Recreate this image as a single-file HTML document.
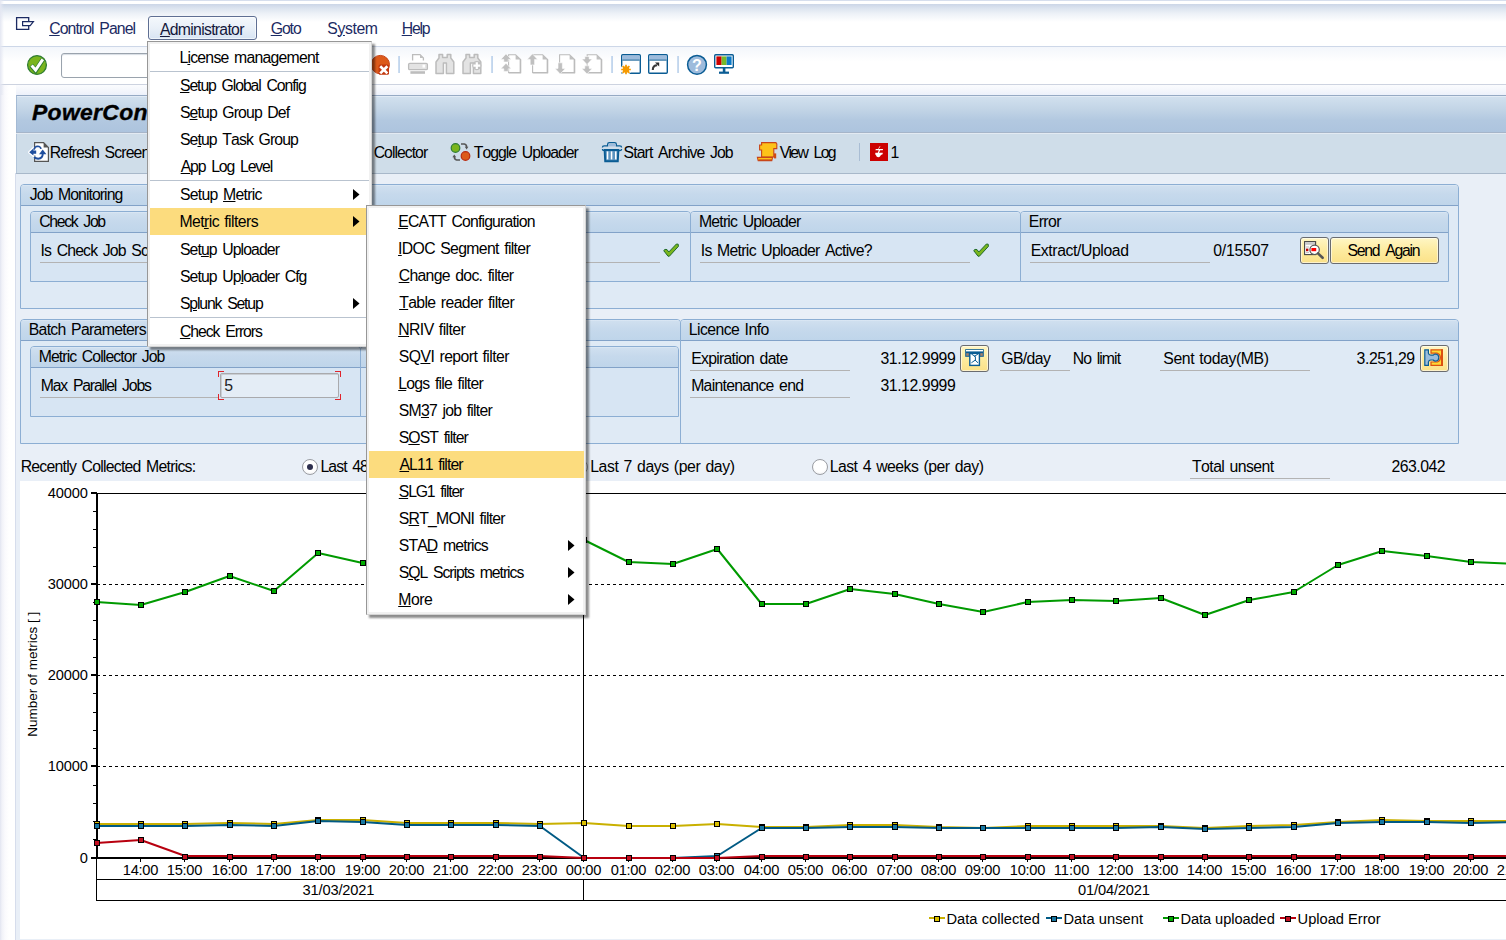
<!DOCTYPE html>
<html><head><meta charset="utf-8"><title>PowerConnect Control Panel</title><style>html,body{margin:0;padding:0}body{width:1506px;height:940px;overflow:hidden;position:relative;font-family:"Liberation Sans",sans-serif;background:#e9eff7}
.t{position:absolute;white-space:pre;line-height:20px;font-kerning:none;font-family:"Liberation Sans",sans-serif}
.t u{text-decoration:underline;text-underline-offset:1px;text-decoration-thickness:1px}
div,svg{position:absolute}</style></head><body>
<div style="position:absolute;left:0px;top:0px;width:1506px;height:940px;background:#e9eff7;"></div>
<div style="position:absolute;left:0px;top:0px;width:1506px;height:47px;background:linear-gradient(#d6deed 0px,#d6deed 1px,#ffffff 1px,#ffffff 4px,#ccd6e7 4.2px,#dbe3ef 8px,#eef2f8 14px,#ffffff 22px,#ffffff 100%);"></div>
<div style="position:absolute;left:0px;top:46px;width:1506px;height:1px;background:#cdd7e8;"></div>
<div style="position:absolute;left:0px;top:47px;width:1506px;height:37px;background:linear-gradient(#f3f6fb,#ffffff 40%,#ffffff);"></div>
<div style="position:absolute;left:0px;top:84px;width:1506px;height:1px;background:#cdd3e0;"></div>
<div style="position:absolute;left:0px;top:85px;width:1506px;height:10px;background:linear-gradient(#fbfcfe,#edf1fa);"></div>
<div style="position:absolute;left:0px;top:85px;width:16px;height:855px;background:linear-gradient(90deg,#e2e5f1 0px,#f1f2f8 2px,#fafafd 5px,#ffffff 9px,#ffffff 16px);"></div>
<div style="position:absolute;left:15px;top:173px;width:1px;height:767px;background:#d6ddec;"></div>
<div style="position:absolute;left:16px;top:174px;width:4px;height:766px;background:#e9eff7;"></div>
<div style="position:absolute;left:0px;top:0px;width:4px;height:95px;background:linear-gradient(90deg,#e4e7f2,rgba(255,255,255,0));"></div>
<div style="position:absolute;left:16px;top:95px;width:1490px;height:37px;background:linear-gradient(#e2ebf5 0px,#e2ebf5 1px,#d1e0ee 1px,#c2d4e6 38%,#b2c8e0 68%,#adc4de 100%);border-top:1px solid #96aac4;border-left:1px solid #a4bad4;box-sizing:border-box;"></div>
<div style="position:absolute;left:16px;top:132px;width:1490px;height:1px;background:#a6b5c9;"></div>
<div style="position:absolute;left:16px;top:133px;width:1490px;height:1px;background:#e3eaf2;"></div>
<div style="position:absolute;left:16px;top:134px;width:1490px;height:39px;background:#cfdde9;border-left:1px solid #b4c6da;box-sizing:border-box;"></div>
<div style="position:absolute;left:16px;top:173px;width:1490px;height:1px;background:#a8b8ca;"></div>
<svg style="position:absolute;left:0px;top:0px" width="40" height="40" viewBox="0 0 40 40"><path d="M28.7 21 V17.6 H16.6 V29.4 H28.7 V26" fill="none" stroke="#1c2b63" stroke-width="1.3"/><path d="M22.6 21.6 H33.4 L30.2 25.6 H22.6 Z" fill="none" stroke="#1c2b63" stroke-width="1.2"/></svg>
<div class="t" style="left:49.20px;top:18.52px;font-size:15.80px;color:#1c2b63;letter-spacing:-0.917px;word-spacing:2.135px;"><u>C</u>ontrol Panel</div>
<div style="position:absolute;left:148px;top:16px;width:109px;height:24px;border:1px solid #5f6f93;border-radius:3px;box-sizing:border-box;background:linear-gradient(#f4f8fc,#e9f0f8 50%,#d7e4f3);box-shadow:inset 0 0 0 1px rgba(255,255,255,.6);"></div>
<div class="t" style="left:159.97px;top:19.52px;font-size:15.80px;color:#14183c;letter-spacing:-0.715px;"><u>A</u>dministrator</div>
<div class="t" style="left:270.71px;top:18.52px;font-size:15.80px;color:#1c2b63;letter-spacing:-1.099px;"><u>G</u>oto</div>
<div class="t" style="left:327.28px;top:18.52px;font-size:15.80px;color:#1c2b63;letter-spacing:-0.384px;">S<u>y</u>stem</div>
<div class="t" style="left:401.70px;top:18.52px;font-size:15.80px;color:#1c2b63;letter-spacing:-1.178px;"><u>H</u>elp</div>
<div style="position:absolute;left:61px;top:53px;width:305px;height:25px;border:1px solid #9aa3ad;border-radius:3px;box-sizing:border-box;background:#fff;box-shadow:inset 0 1px 1px #d8dde4;"></div>
<div class="t" style="left:32.42px;top:103.11px;font-size:21.60px;color:#000;font-weight:bold;font-style:italic;letter-spacing:0.3px;-webkit-text-stroke:0.35px #000;transform-origin:0 50%;transform:scaleX(1.06);">PowerConnect Control Panel</div>
<div class="t" style="left:49.70px;top:142.52px;font-size:15.80px;color:#000;letter-spacing:-0.859px;word-spacing:2.019px;">Refresh Screen</div>
<div class="t" style="left:373.70px;top:142.52px;font-size:15.80px;color:#000;letter-spacing:-0.985px;">Collector</div>
<div class="t" style="left:473.85px;top:142.52px;font-size:15.80px;color:#000;letter-spacing:-1.008px;word-spacing:2.317px;">Toggle Uploader</div>
<div class="t" style="left:623.58px;top:142.52px;font-size:15.80px;color:#000;letter-spacing:-0.902px;word-spacing:2.104px;">Start Archive Job</div>
<div class="t" style="left:779.63px;top:142.52px;font-size:15.80px;color:#000;letter-spacing:-1.662px;word-spacing:3.624px;">View Log</div>
<div style="position:absolute;left:859px;top:143px;width:1px;height:18px;background:#a9bdd4;"></div>
<div class="t" style="left:890.40px;top:142.52px;font-size:15.80px;color:#000;">1</div>
<div style="position:absolute;left:20px;top:184px;width:1439px;height:125px;box-sizing:border-box;border:1px solid #8caed3;border-radius:4px 4px 0 0;background:#dfeaf5;"></div>
<div style="position:absolute;left:21px;top:185px;width:1437px;height:20px;background:linear-gradient(#dde9f5 0px,#cfdfef 1.5px,#c6d9ec 45%,#bfd5ea 100%);border-bottom:1px solid #82a2c8;border-radius:3px 3px 0 0;"></div>
<div class="t" style="left:29.75px;top:184.52px;font-size:15.80px;color:#000;letter-spacing:-0.943px;word-spacing:2.185px;">Job Monitoring</div>
<div style="position:absolute;left:30px;top:211px;width:331px;height:71px;box-sizing:border-box;border:1px solid #8caed3;border-radius:4px 4px 0 0;background:#d7e5f3;"></div>
<div style="position:absolute;left:31px;top:212px;width:329px;height:20px;background:linear-gradient(#dde9f5 0px,#cfdfef 1.5px,#c6d9ec 45%,#bfd5ea 100%);border-bottom:1px solid #82a2c8;border-radius:3px 3px 0 0;"></div>
<div style="position:absolute;left:360px;top:211px;width:331px;height:71px;box-sizing:border-box;border:1px solid #8caed3;border-radius:4px 4px 0 0;background:#d7e5f3;"></div>
<div style="position:absolute;left:361px;top:212px;width:329px;height:20px;background:linear-gradient(#dde9f5 0px,#cfdfef 1.5px,#c6d9ec 45%,#bfd5ea 100%);border-bottom:1px solid #82a2c8;border-radius:3px 3px 0 0;"></div>
<div style="position:absolute;left:690px;top:211px;width:331px;height:71px;box-sizing:border-box;border:1px solid #8caed3;border-radius:4px 4px 0 0;background:#d7e5f3;"></div>
<div style="position:absolute;left:691px;top:212px;width:329px;height:20px;background:linear-gradient(#dde9f5 0px,#cfdfef 1.5px,#c6d9ec 45%,#bfd5ea 100%);border-bottom:1px solid #82a2c8;border-radius:3px 3px 0 0;"></div>
<div style="position:absolute;left:1020px;top:211px;width:429px;height:71px;box-sizing:border-box;border:1px solid #8caed3;border-radius:4px 4px 0 0;background:#d7e5f3;"></div>
<div style="position:absolute;left:1021px;top:212px;width:427px;height:20px;background:linear-gradient(#dde9f5 0px,#cfdfef 1.5px,#c6d9ec 45%,#bfd5ea 100%);border-bottom:1px solid #82a2c8;border-radius:3px 3px 0 0;"></div>
<div class="t" style="left:39.20px;top:211.52px;font-size:15.80px;color:#000;letter-spacing:-1.331px;word-spacing:2.961px;">Check Job</div>
<div class="t" style="left:40.54px;top:240.52px;font-size:15.80px;color:#000;letter-spacing:-0.846px;word-spacing:1.992px;">Is Check Job Scheduled?</div>
<div style="position:absolute;left:40px;top:262px;width:290px;height:1px;background:#b3b3b3;"></div>
<div style="position:absolute;left:370px;top:262px;width:290px;height:1px;background:#b3b3b3;"></div>
<div class="t" style="left:699.00px;top:211.52px;font-size:15.80px;color:#000;letter-spacing:-0.805px;word-spacing:1.910px;">Metric Uploader</div>
<div class="t" style="left:700.84px;top:240.52px;font-size:15.80px;color:#000;letter-spacing:-0.713px;word-spacing:1.727px;">Is Metric Uploader Active?</div>
<div style="position:absolute;left:700px;top:262px;width:270px;height:1px;background:#b3b3b3;"></div>
<div class="t" style="left:1028.70px;top:211.52px;font-size:15.80px;color:#000;letter-spacing:-0.563px;">Error</div>
<div class="t" style="left:1030.70px;top:240.52px;font-size:15.80px;color:#000;letter-spacing:-0.409px;">Extract/Upload</div>
<div style="position:absolute;left:1030px;top:262px;width:179.5px;height:1px;background:#b3b3b3;"></div>
<div class="t" style="left:1213.18px;top:240.52px;font-size:15.80px;color:#000;letter-spacing:-0.200px;">0/15507</div>
<div style="position:absolute;left:1300px;top:237px;width:29px;height:27px;box-sizing:border-box;border:1px solid #6a6c70;border-radius:3px;background:linear-gradient(#fff6c4,#fdeb9f 50%,#fbe188);box-shadow:inset 0 0 0 1px rgba(255,255,255,.55);"></div>
<div style="position:absolute;left:1330px;top:237px;width:109px;height:27px;box-sizing:border-box;border:1px solid #6a6c70;border-radius:3px;background:linear-gradient(#fff6c4,#fdeb9f 50%,#fbe188);box-shadow:inset 0 0 0 1px rgba(255,255,255,.55);"></div>
<div class="t" style="left:1347.58px;top:240.52px;font-size:15.80px;color:#000;letter-spacing:-1.280px;word-spacing:2.859px;">Send Again</div>
<div style="position:absolute;left:20px;top:319px;width:661px;height:125px;box-sizing:border-box;border:1px solid #8caed3;border-radius:4px 4px 0 0;background:#dfeaf5;"></div>
<div style="position:absolute;left:21px;top:320px;width:659px;height:20px;background:linear-gradient(#dde9f5 0px,#cfdfef 1.5px,#c6d9ec 45%,#bfd5ea 100%);border-bottom:1px solid #82a2c8;border-radius:3px 3px 0 0;"></div>
<div class="t" style="left:28.70px;top:319.52px;font-size:15.80px;color:#000;letter-spacing:-0.684px;word-spacing:1.667px;">Batch Parameters</div>
<div style="position:absolute;left:30px;top:346px;width:331px;height:71px;box-sizing:border-box;border:1px solid #8caed3;border-radius:4px 4px 0 0;background:#d7e5f3;"></div>
<div style="position:absolute;left:31px;top:347px;width:329px;height:20px;background:linear-gradient(#dde9f5 0px,#cfdfef 1.5px,#c6d9ec 45%,#bfd5ea 100%);border-bottom:1px solid #82a2c8;border-radius:3px 3px 0 0;"></div>
<div style="position:absolute;left:360px;top:346px;width:319px;height:71px;box-sizing:border-box;border:1px solid #8caed3;border-radius:4px 4px 0 0;background:#d7e5f3;"></div>
<div style="position:absolute;left:361px;top:347px;width:317px;height:20px;background:linear-gradient(#dde9f5 0px,#cfdfef 1.5px,#c6d9ec 45%,#bfd5ea 100%);border-bottom:1px solid #82a2c8;border-radius:3px 3px 0 0;"></div>
<div class="t" style="left:38.70px;top:346.52px;font-size:15.80px;color:#000;letter-spacing:-0.903px;word-spacing:2.106px;">Metric Collector Job</div>
<div class="t" style="left:40.70px;top:375.52px;font-size:15.80px;color:#000;letter-spacing:-1.169px;word-spacing:2.638px;">Max Parallel Jobs</div>
<div style="position:absolute;left:40px;top:397px;width:179px;height:1px;background:#b3b3b3;"></div>
<div style="position:absolute;left:220px;top:373px;width:119px;height:25px;box-sizing:border-box;border:1px solid #a9aaad;border-radius:2px;background:#e4edf6;box-shadow:inset 1px 1px 0 #c9ced4;"></div>
<div style="position:absolute;left:218px;top:371px;width:6px;height:1px;background:#e0242b;"></div>
<div style="position:absolute;left:218px;top:371px;width:1px;height:6px;background:#e0242b;"></div>
<div style="position:absolute;left:335px;top:371px;width:6px;height:1px;background:#e0242b;"></div>
<div style="position:absolute;left:340px;top:371px;width:1px;height:6px;background:#e0242b;"></div>
<div style="position:absolute;left:218px;top:399px;width:6px;height:1px;background:#e0242b;"></div>
<div style="position:absolute;left:218px;top:394px;width:1px;height:6px;background:#e0242b;"></div>
<div style="position:absolute;left:335px;top:399px;width:6px;height:1px;background:#e0242b;"></div>
<div style="position:absolute;left:340px;top:394px;width:1px;height:6px;background:#e0242b;"></div>
<div class="t" style="left:224.37px;top:375.52px;font-size:15.80px;color:#222;">5</div>
<div style="position:absolute;left:680px;top:319px;width:779px;height:125px;box-sizing:border-box;border:1px solid #8caed3;border-radius:4px 4px 0 0;background:#dfeaf5;"></div>
<div style="position:absolute;left:681px;top:320px;width:777px;height:20px;background:linear-gradient(#dde9f5 0px,#cfdfef 1.5px,#c6d9ec 45%,#bfd5ea 100%);border-bottom:1px solid #82a2c8;border-radius:3px 3px 0 0;"></div>
<div class="t" style="left:688.70px;top:319.52px;font-size:15.80px;color:#000;letter-spacing:-0.538px;word-spacing:1.376px;">Licence Info</div>
<div class="t" style="left:691.20px;top:348.52px;font-size:15.80px;color:#000;letter-spacing:-0.725px;word-spacing:1.750px;">Expiration date</div>
<div style="position:absolute;left:690px;top:370px;width:160px;height:1px;background:#b3b3b3;"></div>
<div class="t" style="left:880.40px;top:348.52px;font-size:15.80px;color:#000;letter-spacing:-0.414px;">31.12.9999</div>
<div style="position:absolute;left:960px;top:345px;width:29px;height:27px;box-sizing:border-box;border:1px solid #6a6c70;border-radius:3px;background:linear-gradient(#fff6c4,#fdeb9f 50%,#fbe188);box-shadow:inset 0 0 0 1px rgba(255,255,255,.55);"></div>
<div class="t" style="left:1001.21px;top:348.52px;font-size:15.80px;color:#000;letter-spacing:-0.613px;">GB/day</div>
<div style="position:absolute;left:1000px;top:370px;width:70px;height:1px;background:#b3b3b3;"></div>
<div class="t" style="left:1072.70px;top:348.52px;font-size:15.80px;color:#000;letter-spacing:-0.911px;word-spacing:2.123px;">No limit</div>
<div class="t" style="left:1163.28px;top:348.52px;font-size:15.80px;color:#000;letter-spacing:-0.397px;word-spacing:1.094px;">Sent today(MB)</div>
<div style="position:absolute;left:1160px;top:370px;width:150px;height:1px;background:#b3b3b3;"></div>
<div class="t" style="left:1356.60px;top:348.52px;font-size:15.80px;color:#000;letter-spacing:-0.422px;">3.251,29</div>
<div style="position:absolute;left:1420px;top:345px;width:29px;height:27px;box-sizing:border-box;border:1px solid #6a6c70;border-radius:3px;background:linear-gradient(#fff6c4,#fdeb9f 50%,#fbe188);box-shadow:inset 0 0 0 1px rgba(255,255,255,.55);"></div>
<div class="t" style="left:691.20px;top:375.52px;font-size:15.80px;color:#000;letter-spacing:-0.726px;word-spacing:1.751px;">Maintenance end</div>
<div style="position:absolute;left:690px;top:397px;width:160px;height:1px;background:#b3b3b3;"></div>
<div class="t" style="left:880.40px;top:375.52px;font-size:15.80px;color:#000;letter-spacing:-0.414px;">31.12.9999</div>
<div class="t" style="left:20.70px;top:456.52px;font-size:15.80px;color:#000;letter-spacing:-0.754px;word-spacing:1.807px;">Recently Collected Metrics:</div>
<div style="position:absolute;left:302px;top:459px;width:16px;height:16px;box-sizing:border-box;border:1.5px solid #9b9da3;border-radius:50%;background:radial-gradient(circle at 50% 40%,#ffffff 55%,#e6e8ec);"></div><div style="position:absolute;left:307px;top:464px;width:6px;height:6px;border-radius:50%;background:#2d2f4e;"></div>
<div class="t" style="left:320.50px;top:456.52px;font-size:15.80px;color:#000;letter-spacing:-0.934px;word-spacing:2.169px;">Last 48 hours</div>
<div style="position:absolute;left:572px;top:459px;width:16px;height:16px;box-sizing:border-box;border:1.5px solid #9b9da3;border-radius:50%;background:radial-gradient(circle at 50% 40%,#ffffff 55%,#e6e8ec);"></div>
<div class="t" style="left:590.20px;top:456.52px;font-size:15.80px;color:#000;letter-spacing:-0.404px;word-spacing:1.107px;">Last 7 days (per day)</div>
<div style="position:absolute;left:812px;top:459px;width:16px;height:16px;box-sizing:border-box;border:1.5px solid #9b9da3;border-radius:50%;background:radial-gradient(circle at 50% 40%,#ffffff 55%,#e6e8ec);"></div>
<div class="t" style="left:829.70px;top:456.52px;font-size:15.80px;color:#000;letter-spacing:-0.519px;word-spacing:1.339px;">Last 4 weeks (per day)</div>
<div class="t" style="left:1192.05px;top:456.52px;font-size:15.80px;color:#000;letter-spacing:-0.576px;word-spacing:1.452px;">Total unsent</div>
<div style="position:absolute;left:1190px;top:478px;width:140px;height:1px;background:#b3b3b3;"></div>
<div class="t" style="left:1391.61px;top:456.52px;font-size:15.80px;color:#000;letter-spacing:-0.537px;">263.042</div>
<svg style="position:absolute;left:0;top:0" width="1506" height="940" viewBox="0 0 1506 940"><circle cx="37" cy="65" r="9.4" fill="#7ab51d" stroke="#2f7d32" stroke-width="1.3"/><path d="M31.2 65.2 L35.6 70.6 L43 59.2" fill="none" stroke="#2f7d32" stroke-width="4.6" stroke-linejoin="miter"/><path d="M31.6 65.4 L35.6 70 L42.8 59.4" fill="none" stroke="#fff" stroke-width="3"/><circle cx="380.3" cy="64.6" r="9.2" fill="#dc5a1a" stroke="#c8461a" stroke-width="1"/><rect x="378.6" y="64.6" width="10.4" height="10.2" rx="1.6" fill="#c2380e"/><path d="M381.2 67.2 L386.4 72.4 M386.4 67.2 L381.2 72.4" stroke="#fff" stroke-width="2.7" stroke-linecap="square"/><rect x="398.4" y="56" width="1.3" height="17" fill="#a9c5e6"/><rect x="491.4" y="56" width="1.3" height="17" fill="#a9c5e6"/><rect x="611.4" y="56" width="1.3" height="17" fill="#a9c5e6"/><rect x="677.4" y="56" width="1.3" height="17" fill="#a9c5e6"/><path d="M412.6 60.5 V54.6 H420 L423.4 58 V60.5" fill="#fff" stroke="#bcbcbc" stroke-width="1.3"/><path d="M420 54.6 V58 H423.4 Z" fill="#c0c0c0"/><rect x="408.6" y="63.4" width="18.8" height="6.2" rx="1.2" fill="#e3e3e3" stroke="#bcbcbc" stroke-width="1.3"/><rect x="422.5" y="64.6" width="2.6" height="3" fill="#fff"/><rect x="410.4" y="71.2" width="14.6" height="2.6" fill="#bdbdbd"/><path d="M439 54.6 h3.6 v3 h4.6 v-3 h3.6 v3.4 l3 4 v11.6 h-7.4 v-10.6 h-3 v10.6 h-7.4 v-11.6 l3 -4 z" fill="#e3e3e3" stroke="#bcbcbc" stroke-width="1.5" stroke-linejoin="round"/><path d="M466 54.6 h3.6 v3 h4.6 v-3 h3.6 v3.4 l3 4 v11.6 h-7.4 v-10.6 h-3 v10.6 h-7.4 v-11.6 l3 -4 z" fill="#e3e3e3" stroke="#bcbcbc" stroke-width="1.5" stroke-linejoin="round"/><circle cx="476.8" cy="65.6" r="4.6" fill="#c0c0c0"/><path d="M473.4 65.6 h6.8 M476.8 62.2 v6.8" stroke="#fff" stroke-width="2.2"/><path d="M508.6 54.7 H515.6 L520.6 59.6 V72.5 H508.6 Z" fill="#fff" stroke="#bcbcbc" stroke-width="1.1"/><path d="M515.6 54.7 V59.6 H520.6 Z" fill="#c0c0c0"/><path d="M508.6 72.7 H520.4 V59.6" fill="none" stroke="#bcbcbc" stroke-width="1.5"/><path d="M506 53.8 l5.2 5.6 h-3 v2.6 h-4.4 v-2.6 h-3 z" fill="#c0c0c0" stroke="#fff" stroke-width="0.6"/><path d="M506 63.2 l5.2 5.6 h-3 v2.6 h-4.4 v-2.6 h-3 z" fill="#c0c0c0" stroke="#fff" stroke-width="0.6"/><path d="M532.6 54.7 H542.6 L547.6 59.6 V72.5 H532.6 Z" fill="#fff" stroke="#bcbcbc" stroke-width="1.1"/><path d="M542.6 54.7 V59.6 H547.6 Z" fill="#c0c0c0"/><path d="M532.6 72.7 H547.4 V59.6" fill="none" stroke="#bcbcbc" stroke-width="1.5"/><path d="M532.4 53.8 l5.2 5.6 h-3 v5.6 h-4.4 v-5.6 h-3 z" fill="#c0c0c0" stroke="#fff" stroke-width="0.6"/><path d="M559.6 54.7 H569.6 L574.6 59.6 V72.5 H559.6 Z" fill="#fff" stroke="#bcbcbc" stroke-width="1.1"/><path d="M569.6 54.7 V59.6 H574.6 Z" fill="#c0c0c0"/><path d="M559.6 72.7 H574.4 V59.6" fill="none" stroke="#bcbcbc" stroke-width="1.5"/><path d="M560.2 74 l5.2 -5.6 h-3 v-5.6 h-4.4 v5.6 h-3 z" fill="#c0c0c0" stroke="#fff" stroke-width="0.6"/><path d="M587.2 54.7 H596.6 L601.6 59.6 V72.5 H587.2 Z" fill="#fff" stroke="#bcbcbc" stroke-width="1.1"/><path d="M596.6 54.7 V59.6 H601.6 Z" fill="#c0c0c0"/><path d="M587.2 72.7 H601.4 V59.6" fill="none" stroke="#bcbcbc" stroke-width="1.5"/><path d="M587 64.6 l5.2 -5.6 h-3 v-2.6 h-4.4 v2.6 h-3 z" fill="#c0c0c0" stroke="#fff" stroke-width="0.6"/><path d="M587 74 l5.2 -5.6 h-3 v-2.6 h-4.4 v2.6 h-3 z" fill="#c0c0c0" stroke="#fff" stroke-width="0.6"/><rect x="621.7" y="54.7" width="18.6" height="18.6" rx="1" fill="#fff" stroke="#0a5c94" stroke-width="1.4"/><rect x="622.4" y="55.4" width="17.2" height="4.4" fill="#9dbbdc"/><rect x="622.4" y="59.6" width="17.2" height="1" fill="#0a5c94"/><circle cx="626" cy="69.5" r="5.4" fill="#fff"/><circle cx="626" cy="69.5" r="3.2" fill="#f59a00"/><path d="M626 64.7 v9.6 M621.2 69.5 h9.6 M622.6 66.1 l6.8 6.8 M629.4 66.1 l-6.8 6.8" stroke="#f59a00" stroke-width="1.7"/><rect x="648.7" y="54.7" width="18.6" height="18.6" rx="1" fill="#fff" stroke="#0a5c94" stroke-width="1.4"/><rect x="649.4" y="55.4" width="17.2" height="4.4" fill="#9dbbdc"/><rect x="649.4" y="59.6" width="17.2" height="1" fill="#0a5c94"/><path d="M652.8 70 q0 -4.8 4.4 -4.8" fill="none" stroke="#3a3a3a" stroke-width="2.1"/><path d="M655 62.4 h4.2 v4.2 z" fill="#2a2a2a"/><circle cx="697" cy="64.8" r="9.4" fill="#9dbbdc" stroke="#0a5c94" stroke-width="1.5"/><text x="697" y="70.6" font-family="Liberation Sans, sans-serif" font-weight="bold" font-size="16" text-anchor="middle" fill="#fff">?</text><rect x="714.7" y="54.7" width="18.6" height="13" rx="1" fill="#fff" stroke="#0a5c94" stroke-width="1.4"/><rect x="716.4" y="56.4" width="5.2" height="8.6" fill="#cc0000"/><rect x="721.6" y="56.4" width="5" height="8.6" fill="#76b82a"/><rect x="726.6" y="56.4" width="5" height="8.6" fill="#0a7ac8"/><rect x="722.8" y="68" width="2.6" height="4" fill="#0a5c94"/><rect x="719" y="71.6" width="10" height="2.2" fill="#0a5c94"/><path d="M34.6 142.6 H43.6 L48.4 147.4 V161.4 H34.6 Z" fill="#fff" stroke="#555" stroke-width="1.2"/><path d="M43.6 142.6 V147.4 H48.4 Z" fill="#555"/><path d="M29 152.2 L33.6 147.8 V150.2 H36.6 V154 H33.6 V156.2 Z" fill="#fff" stroke="#fff" stroke-width="2" stroke-linejoin="round"/><path d="M41 148.8 Q40.6 146.3 37.6 146.2 Q34.6 146.4 34 149.6" fill="none" stroke="#1f4e9e" stroke-width="1.6"/><path d="M29.2 152.2 L33.4 148.6 V150.6 H36.2 V153.8 H33.4 V155.6 Z" fill="#1f4e9e"/><path d="M42.7 149.4 L46.4 154.2 H39 Z" fill="#1f4e9e"/><path d="M42.8 153.6 Q42.8 158.6 38.2 158.7 Q35.6 158.5 34.2 157" fill="none" stroke="#1f4e9e" stroke-width="1.9"/><circle cx="455.5" cy="148" r="4.3" fill="#7ab51d" stroke="#2f7d32" stroke-width="1.2"/><circle cx="465.5" cy="156" r="4.3" fill="#dc5a1a" stroke="#b82a10" stroke-width="1.2"/><path d="M461 144 h3.4 q2.2 0.4 2.2 3" fill="none" stroke="#555" stroke-width="1.6"/><path d="M464.8 146.8 h3.6 l-1.8 2.8 z" fill="#555"/><path d="M460 160 h-3.4 q-2.2 -0.4 -2.2 -3" fill="none" stroke="#555" stroke-width="1.6"/><path d="M452.4 157.2 h3.8 l-1.9 -2.8 z" fill="#555"/><path d="M602.4 147.4 q0 -1.6 1.8 -1.6 h3.4 v-1.4 q0 -1.8 1.8 -1.8 h5.2 q1.8 0 1.8 1.8 v1.4 h3.4 q1.8 0 1.8 1.6" fill="none" stroke="#0a5c94" stroke-width="1.3"/><rect x="608.6" y="144" width="6.8" height="2.4" fill="#9dbbdc"/><path d="M602.4 149 q0 1.6 1.8 1.6 h15.6 q1.8 0 1.8 -1.6" fill="none" stroke="#0a5c94" stroke-width="1.3"/><path d="M604.6 150 h13.8 l-0.6 11.2 h-12.6 z" fill="#5d94c0" stroke="#0a5c94" stroke-width="1.9"/><rect x="606.8" y="151.4" width="1.5" height="8" fill="#fff"/><rect x="610.8" y="151.4" width="1.5" height="8" fill="#fff"/><rect x="615" y="151.4" width="1.5" height="8" fill="#fff"/><path d="M761.6 142.6 H775.6 q1.6 0.4 1.2 3 v3 h-3 V157 H761.6 V150 h-2 v-5 h2 Z" fill="#fdc21a" stroke="#c8461a" stroke-width="1.1"/><rect x="774" y="153.4" width="2.2" height="5" fill="#d04a14"/><path d="M757.4 157.4 h15.2 l-0.8 3.4 h-13.6 z" fill="#fdc21a" stroke="#c8461a" stroke-width="1.1"/><rect x="758.6" y="159.4" width="13.4" height="1.6" fill="#c8461a"/><rect x="870" y="143" width="18" height="18" fill="#cc0000"/><path d="M880.6 146 l-2 3 h4.4 l-0.2 1.2 h-2.6 l-1.2 2.6 h3.8 l-0.2 1.4 q-2 0.6 -2.6 2.2 q-1.2 1.4 -3.2 0.4 l-0.8 -1.6 l-0.8 -1 l0.2 -1.4 h2.4 l1 -2.6 h-3.4 l0.4 -1.2 h2.4 l1 -2.2 z" fill="#fff"/><path transform="translate(663,243)" d="M0.7 7.6 L2 6.4 L4 6.6 L5.8 9 L13.4 1 L15.2 1.2 L15.4 3.4 L6.4 13.2 L5 13.2 Z" fill="#7ab51d" stroke="#1f6b2a" stroke-width="1" stroke-linejoin="round"/><path transform="translate(973,243)" d="M0.7 7.6 L2 6.4 L4 6.6 L5.8 9 L13.4 1 L15.2 1.2 L15.4 3.4 L6.4 13.2 L5 13.2 Z" fill="#7ab51d" stroke="#1f6b2a" stroke-width="1" stroke-linejoin="round"/><rect x="1304.6" y="241.6" width="11" height="13" fill="#fff" stroke="#444" stroke-width="1.1"/><rect x="1305.2" y="242.2" width="9.8" height="2.6" fill="#c8c8c8"/><rect x="1306" y="248.6" width="2.4" height="2.6" fill="#c00000"/><path d="M1306 247 h3 M1306 252.6 h3" stroke="#aaa" stroke-width=".8"/><circle cx="1314.6" cy="249.8" r="4.7" fill="#fff" stroke="#555" stroke-width="1.2"/><rect x="1311.4" y="248" width="4.8" height="3.2" fill="#ff0000"/><path d="M1318 253.4 L1322.6 257.8" stroke="#555" stroke-width="2.6" stroke-linecap="round"/><rect x="965.2" y="349.2" width="18.6" height="7.6" fill="#0a5c94"/><rect x="966" y="350" width="17" height="1.4" fill="#fff"/><rect x="966.2" y="353.2" width="2.6" height="2.6" fill="#a8826a"/><rect x="980.2" y="353.2" width="2.6" height="2.6" fill="#a8826a"/><rect x="969.8" y="353.4" width="9.6" height="12" fill="#fff" stroke="#0a5c94" stroke-width="1.4"/><path d="M971.4 354 L975.4 356.6 V360 L971.4 362.8 M978 354 L974 356.6 M975 360 L978 362.8" fill="none" stroke="#0a5c94" stroke-width="1"/><path d="M1431 349.8 H1442.4 V365.4 H1431 V362 h6.4 q3 -1 3 -4.4 q0 -3.4 -3 -4.4 H1431 Z" fill="#fdd835" stroke="#dc5010" stroke-width="1.2"/><rect x="1441" y="349.4" width="1.9" height="16.4" fill="#dc5010"/><path d="M1424.8 349.8 h3.6 v3.4 q0.4 2 2.4 2 h2.4 q1 -1.2 2.6 -1.2 q3 0.4 3 3.6 q0 3.2 -3 3.6 q-1.6 0 -2.6 -1.2 h-2.4 q-2 0 -2.4 2 v3.4 h-3.6 z" fill="#9abcdc" stroke="#0a5c94" stroke-width="1.2"/></svg>
<div style="position:absolute;left:20px;top:481px;width:1486px;height:458px;background:#fff;"></div>
<svg style="position:absolute;left:0;top:0" width="1506" height="940" viewBox="0 0 1506 940" font-family="Liberation Sans, sans-serif"><line x1="97" y1="584.5" x2="1506" y2="584.5" stroke="#000" stroke-width="1" stroke-dasharray="3 3" shape-rendering="crispEdges"/><line x1="97" y1="675.5" x2="1506" y2="675.5" stroke="#000" stroke-width="1" stroke-dasharray="3 3" shape-rendering="crispEdges"/><line x1="97" y1="766.5" x2="1506" y2="766.5" stroke="#000" stroke-width="1" stroke-dasharray="3 3" shape-rendering="crispEdges"/><line x1="96" y1="493.5" x2="1506" y2="493.5" stroke="#000" stroke-width="1" shape-rendering="crispEdges"/><rect x="96" y="493" width="2" height="366" fill="#000"/><rect x="91" y="857" width="1415" height="2" fill="#000"/><rect x="93" y="839" width="4" height="1" fill="#000" shape-rendering="crispEdges"/><rect x="93" y="821" width="4" height="1" fill="#000" shape-rendering="crispEdges"/><rect x="93" y="803" width="4" height="1" fill="#000" shape-rendering="crispEdges"/><rect x="93" y="785" width="4" height="1" fill="#000" shape-rendering="crispEdges"/><rect x="91" y="765" width="6" height="2" fill="#000" shape-rendering="crispEdges"/><rect x="93" y="748" width="4" height="1" fill="#000" shape-rendering="crispEdges"/><rect x="93" y="730" width="4" height="1" fill="#000" shape-rendering="crispEdges"/><rect x="93" y="712" width="4" height="1" fill="#000" shape-rendering="crispEdges"/><rect x="93" y="693" width="4" height="1" fill="#000" shape-rendering="crispEdges"/><rect x="91" y="674" width="6" height="2" fill="#000" shape-rendering="crispEdges"/><rect x="93" y="657" width="4" height="1" fill="#000" shape-rendering="crispEdges"/><rect x="93" y="639" width="4" height="1" fill="#000" shape-rendering="crispEdges"/><rect x="93" y="620" width="4" height="1" fill="#000" shape-rendering="crispEdges"/><rect x="93" y="602" width="4" height="1" fill="#000" shape-rendering="crispEdges"/><rect x="91" y="583" width="6" height="2" fill="#000" shape-rendering="crispEdges"/><rect x="93" y="566" width="4" height="1" fill="#000" shape-rendering="crispEdges"/><rect x="93" y="547" width="4" height="1" fill="#000" shape-rendering="crispEdges"/><rect x="93" y="529" width="4" height="1" fill="#000" shape-rendering="crispEdges"/><rect x="93" y="511" width="4" height="1" fill="#000" shape-rendering="crispEdges"/><rect x="91" y="492" width="6" height="2" fill="#000" shape-rendering="crispEdges"/><text x="87.8" y="863" font-size="14.67" text-anchor="end" textLength="8" lengthAdjust="spacing">0</text><text x="87.8" y="771" font-size="14.67" text-anchor="end" textLength="40" lengthAdjust="spacing">10000</text><text x="87.8" y="680" font-size="14.67" text-anchor="end" textLength="40" lengthAdjust="spacing">20000</text><text x="87.8" y="589" font-size="14.67" text-anchor="end" textLength="40" lengthAdjust="spacing">30000</text><text x="87.8" y="498" font-size="14.67" text-anchor="end" textLength="40" lengthAdjust="spacing">40000</text><text transform="translate(37,674.3) rotate(-90)" font-size="13.5" text-anchor="middle" textLength="125" lengthAdjust="spacing">Number of metrics [ ]</text><g shape-rendering="crispEdges" stroke="#000" stroke-width="1" fill="none"><line x1="96.5" y1="859" x2="96.5" y2="900.5"/><line x1="96" y1="879.5" x2="1506" y2="879.5"/><line x1="96" y1="900.5" x2="1506" y2="900.5"/><line x1="583.5" y1="494" x2="583.5" y2="857"/><line x1="583.5" y1="879.5" x2="583.5" y2="900.5"/></g><rect x="140" y="859" width="1" height="3" fill="#000" shape-rendering="crispEdges"/><text x="140.6" y="875" font-size="14.67" text-anchor="middle" textLength="35.6" lengthAdjust="spacing">14:00</text><rect x="184" y="859" width="1" height="3" fill="#000" shape-rendering="crispEdges"/><text x="184.6" y="875" font-size="14.67" text-anchor="middle" textLength="35.6" lengthAdjust="spacing">15:00</text><rect x="229" y="859" width="1" height="3" fill="#000" shape-rendering="crispEdges"/><text x="229.6" y="875" font-size="14.67" text-anchor="middle" textLength="35.6" lengthAdjust="spacing">16:00</text><rect x="273" y="859" width="1" height="3" fill="#000" shape-rendering="crispEdges"/><text x="273.6" y="875" font-size="14.67" text-anchor="middle" textLength="35.6" lengthAdjust="spacing">17:00</text><rect x="317" y="859" width="1" height="3" fill="#000" shape-rendering="crispEdges"/><text x="317.6" y="875" font-size="14.67" text-anchor="middle" textLength="35.6" lengthAdjust="spacing">18:00</text><rect x="362" y="859" width="1" height="3" fill="#000" shape-rendering="crispEdges"/><text x="362.6" y="875" font-size="14.67" text-anchor="middle" textLength="35.6" lengthAdjust="spacing">19:00</text><rect x="406" y="859" width="1" height="3" fill="#000" shape-rendering="crispEdges"/><text x="406.6" y="875" font-size="14.67" text-anchor="middle" textLength="35.6" lengthAdjust="spacing">20:00</text><rect x="450" y="859" width="1" height="3" fill="#000" shape-rendering="crispEdges"/><text x="450.6" y="875" font-size="14.67" text-anchor="middle" textLength="35.6" lengthAdjust="spacing">21:00</text><rect x="495" y="859" width="1" height="3" fill="#000" shape-rendering="crispEdges"/><text x="495.6" y="875" font-size="14.67" text-anchor="middle" textLength="35.6" lengthAdjust="spacing">22:00</text><rect x="539" y="859" width="1" height="3" fill="#000" shape-rendering="crispEdges"/><text x="539.6" y="875" font-size="14.67" text-anchor="middle" textLength="35.6" lengthAdjust="spacing">23:00</text><rect x="583" y="859" width="1" height="3" fill="#000" shape-rendering="crispEdges"/><text x="583.6" y="875" font-size="14.67" text-anchor="middle" textLength="35.6" lengthAdjust="spacing">00:00</text><rect x="628" y="859" width="1" height="3" fill="#000" shape-rendering="crispEdges"/><text x="628.6" y="875" font-size="14.67" text-anchor="middle" textLength="35.6" lengthAdjust="spacing">01:00</text><rect x="672" y="859" width="1" height="3" fill="#000" shape-rendering="crispEdges"/><text x="672.6" y="875" font-size="14.67" text-anchor="middle" textLength="35.6" lengthAdjust="spacing">02:00</text><rect x="716" y="859" width="1" height="3" fill="#000" shape-rendering="crispEdges"/><text x="716.6" y="875" font-size="14.67" text-anchor="middle" textLength="35.6" lengthAdjust="spacing">03:00</text><rect x="761" y="859" width="1" height="3" fill="#000" shape-rendering="crispEdges"/><text x="761.6" y="875" font-size="14.67" text-anchor="middle" textLength="35.6" lengthAdjust="spacing">04:00</text><rect x="805" y="859" width="1" height="3" fill="#000" shape-rendering="crispEdges"/><text x="805.6" y="875" font-size="14.67" text-anchor="middle" textLength="35.6" lengthAdjust="spacing">05:00</text><rect x="849" y="859" width="1" height="3" fill="#000" shape-rendering="crispEdges"/><text x="849.6" y="875" font-size="14.67" text-anchor="middle" textLength="35.6" lengthAdjust="spacing">06:00</text><rect x="894" y="859" width="1" height="3" fill="#000" shape-rendering="crispEdges"/><text x="894.6" y="875" font-size="14.67" text-anchor="middle" textLength="35.6" lengthAdjust="spacing">07:00</text><rect x="938" y="859" width="1" height="3" fill="#000" shape-rendering="crispEdges"/><text x="938.6" y="875" font-size="14.67" text-anchor="middle" textLength="35.6" lengthAdjust="spacing">08:00</text><rect x="982" y="859" width="1" height="3" fill="#000" shape-rendering="crispEdges"/><text x="982.6" y="875" font-size="14.67" text-anchor="middle" textLength="35.6" lengthAdjust="spacing">09:00</text><rect x="1027" y="859" width="1" height="3" fill="#000" shape-rendering="crispEdges"/><text x="1027.6" y="875" font-size="14.67" text-anchor="middle" textLength="35.6" lengthAdjust="spacing">10:00</text><rect x="1071" y="859" width="1" height="3" fill="#000" shape-rendering="crispEdges"/><text x="1071.6" y="875" font-size="14.67" text-anchor="middle" textLength="35.6" lengthAdjust="spacing">11:00</text><rect x="1115" y="859" width="1" height="3" fill="#000" shape-rendering="crispEdges"/><text x="1115.6" y="875" font-size="14.67" text-anchor="middle" textLength="35.6" lengthAdjust="spacing">12:00</text><rect x="1160" y="859" width="1" height="3" fill="#000" shape-rendering="crispEdges"/><text x="1160.6" y="875" font-size="14.67" text-anchor="middle" textLength="35.6" lengthAdjust="spacing">13:00</text><rect x="1204" y="859" width="1" height="3" fill="#000" shape-rendering="crispEdges"/><text x="1204.6" y="875" font-size="14.67" text-anchor="middle" textLength="35.6" lengthAdjust="spacing">14:00</text><rect x="1248" y="859" width="1" height="3" fill="#000" shape-rendering="crispEdges"/><text x="1248.6" y="875" font-size="14.67" text-anchor="middle" textLength="35.6" lengthAdjust="spacing">15:00</text><rect x="1293" y="859" width="1" height="3" fill="#000" shape-rendering="crispEdges"/><text x="1293.6" y="875" font-size="14.67" text-anchor="middle" textLength="35.6" lengthAdjust="spacing">16:00</text><rect x="1337" y="859" width="1" height="3" fill="#000" shape-rendering="crispEdges"/><text x="1337.6" y="875" font-size="14.67" text-anchor="middle" textLength="35.6" lengthAdjust="spacing">17:00</text><rect x="1381" y="859" width="1" height="3" fill="#000" shape-rendering="crispEdges"/><text x="1381.6" y="875" font-size="14.67" text-anchor="middle" textLength="35.6" lengthAdjust="spacing">18:00</text><rect x="1426" y="859" width="1" height="3" fill="#000" shape-rendering="crispEdges"/><text x="1426.6" y="875" font-size="14.67" text-anchor="middle" textLength="35.6" lengthAdjust="spacing">19:00</text><rect x="1470" y="859" width="1" height="3" fill="#000" shape-rendering="crispEdges"/><text x="1470.6" y="875" font-size="14.67" text-anchor="middle" textLength="35.6" lengthAdjust="spacing">20:00</text><rect x="1514" y="859" width="1" height="3" fill="#000" shape-rendering="crispEdges"/><text x="1514.6" y="875" font-size="14.67" text-anchor="middle" textLength="35.6" lengthAdjust="spacing">21:00</text><text x="338.5" y="895" font-size="14.67" text-anchor="middle" textLength="72" lengthAdjust="spacing">31/03/2021</text><text x="1114" y="895" font-size="14.67" text-anchor="middle" textLength="72" lengthAdjust="spacing">01/04/2021</text><polyline points="96.5,602 140.8,605 185.2,592 229.5,576 273.9,591 318.2,553 362.5,563 406.9,566 451.2,570 495.6,560 539.9,566 584.2,540 628.6,562 672.9,564 717.3,549 761.6,604 805.9,604 850.3,589 894.6,594 939.0,604 983.3,612 1027.6,602 1072.0,600 1116.3,601 1160.7,598 1205.0,615 1249.3,600 1293.7,592 1338.0,565 1382.4,551 1426.7,556 1471.0,562 1515.4,564" fill="none" stroke="#009a00" stroke-width="2" stroke-linejoin="round"/><rect x="94.5" y="599.5" width="5" height="5" fill="#00ab00" stroke="#000" stroke-width="1"/><rect x="138.5" y="602.5" width="5" height="5" fill="#00ab00" stroke="#000" stroke-width="1"/><rect x="182.5" y="589.5" width="5" height="5" fill="#00ab00" stroke="#000" stroke-width="1"/><rect x="227.5" y="573.5" width="5" height="5" fill="#00ab00" stroke="#000" stroke-width="1"/><rect x="271.5" y="588.5" width="5" height="5" fill="#00ab00" stroke="#000" stroke-width="1"/><rect x="315.5" y="550.5" width="5" height="5" fill="#00ab00" stroke="#000" stroke-width="1"/><rect x="360.5" y="560.5" width="5" height="5" fill="#00ab00" stroke="#000" stroke-width="1"/><rect x="404.5" y="563.5" width="5" height="5" fill="#00ab00" stroke="#000" stroke-width="1"/><rect x="448.5" y="567.5" width="5" height="5" fill="#00ab00" stroke="#000" stroke-width="1"/><rect x="493.5" y="557.5" width="5" height="5" fill="#00ab00" stroke="#000" stroke-width="1"/><rect x="537.5" y="563.5" width="5" height="5" fill="#00ab00" stroke="#000" stroke-width="1"/><rect x="581.5" y="537.5" width="5" height="5" fill="#00ab00" stroke="#000" stroke-width="1"/><rect x="626.5" y="559.5" width="5" height="5" fill="#00ab00" stroke="#000" stroke-width="1"/><rect x="670.5" y="561.5" width="5" height="5" fill="#00ab00" stroke="#000" stroke-width="1"/><rect x="714.5" y="546.5" width="5" height="5" fill="#00ab00" stroke="#000" stroke-width="1"/><rect x="759.5" y="601.5" width="5" height="5" fill="#00ab00" stroke="#000" stroke-width="1"/><rect x="803.5" y="601.5" width="5" height="5" fill="#00ab00" stroke="#000" stroke-width="1"/><rect x="847.5" y="586.5" width="5" height="5" fill="#00ab00" stroke="#000" stroke-width="1"/><rect x="892.5" y="591.5" width="5" height="5" fill="#00ab00" stroke="#000" stroke-width="1"/><rect x="936.5" y="601.5" width="5" height="5" fill="#00ab00" stroke="#000" stroke-width="1"/><rect x="980.5" y="609.5" width="5" height="5" fill="#00ab00" stroke="#000" stroke-width="1"/><rect x="1025.5" y="599.5" width="5" height="5" fill="#00ab00" stroke="#000" stroke-width="1"/><rect x="1069.5" y="597.5" width="5" height="5" fill="#00ab00" stroke="#000" stroke-width="1"/><rect x="1113.5" y="598.5" width="5" height="5" fill="#00ab00" stroke="#000" stroke-width="1"/><rect x="1158.5" y="595.5" width="5" height="5" fill="#00ab00" stroke="#000" stroke-width="1"/><rect x="1202.5" y="612.5" width="5" height="5" fill="#00ab00" stroke="#000" stroke-width="1"/><rect x="1246.5" y="597.5" width="5" height="5" fill="#00ab00" stroke="#000" stroke-width="1"/><rect x="1291.5" y="589.5" width="5" height="5" fill="#00ab00" stroke="#000" stroke-width="1"/><rect x="1335.5" y="562.5" width="5" height="5" fill="#00ab00" stroke="#000" stroke-width="1"/><rect x="1379.5" y="548.5" width="5" height="5" fill="#00ab00" stroke="#000" stroke-width="1"/><rect x="1424.5" y="553.5" width="5" height="5" fill="#00ab00" stroke="#000" stroke-width="1"/><rect x="1468.5" y="559.5" width="5" height="5" fill="#00ab00" stroke="#000" stroke-width="1"/><rect x="1512.5" y="561.5" width="5" height="5" fill="#00ab00" stroke="#000" stroke-width="1"/><polyline points="96.5,824 140.8,824 185.2,824 229.5,823 273.9,824 318.2,820 362.5,820 406.9,823 451.2,823 495.6,823 539.9,824 584.2,823 628.6,826 672.9,826 717.3,824 761.6,827 805.9,827 850.3,825 894.6,825 939.0,827 983.3,828 1027.6,826 1072.0,826 1116.3,826 1160.7,826 1205.0,828 1249.3,826 1293.7,825 1338.0,822 1382.4,820 1426.7,821 1471.0,821 1515.4,821" fill="none" stroke="#c9b000" stroke-width="2" stroke-linejoin="round"/><rect x="94.5" y="821.5" width="5" height="5" fill="#dcc000" stroke="#000" stroke-width="1"/><rect x="138.5" y="821.5" width="5" height="5" fill="#dcc000" stroke="#000" stroke-width="1"/><rect x="182.5" y="821.5" width="5" height="5" fill="#dcc000" stroke="#000" stroke-width="1"/><rect x="227.5" y="820.5" width="5" height="5" fill="#dcc000" stroke="#000" stroke-width="1"/><rect x="271.5" y="821.5" width="5" height="5" fill="#dcc000" stroke="#000" stroke-width="1"/><rect x="315.5" y="817.5" width="5" height="5" fill="#dcc000" stroke="#000" stroke-width="1"/><rect x="360.5" y="817.5" width="5" height="5" fill="#dcc000" stroke="#000" stroke-width="1"/><rect x="404.5" y="820.5" width="5" height="5" fill="#dcc000" stroke="#000" stroke-width="1"/><rect x="448.5" y="820.5" width="5" height="5" fill="#dcc000" stroke="#000" stroke-width="1"/><rect x="493.5" y="820.5" width="5" height="5" fill="#dcc000" stroke="#000" stroke-width="1"/><rect x="537.5" y="821.5" width="5" height="5" fill="#dcc000" stroke="#000" stroke-width="1"/><rect x="581.5" y="820.5" width="5" height="5" fill="#dcc000" stroke="#000" stroke-width="1"/><rect x="626.5" y="823.5" width="5" height="5" fill="#dcc000" stroke="#000" stroke-width="1"/><rect x="670.5" y="823.5" width="5" height="5" fill="#dcc000" stroke="#000" stroke-width="1"/><rect x="714.5" y="821.5" width="5" height="5" fill="#dcc000" stroke="#000" stroke-width="1"/><rect x="759.5" y="824.5" width="5" height="5" fill="#dcc000" stroke="#000" stroke-width="1"/><rect x="803.5" y="824.5" width="5" height="5" fill="#dcc000" stroke="#000" stroke-width="1"/><rect x="847.5" y="822.5" width="5" height="5" fill="#dcc000" stroke="#000" stroke-width="1"/><rect x="892.5" y="822.5" width="5" height="5" fill="#dcc000" stroke="#000" stroke-width="1"/><rect x="936.5" y="824.5" width="5" height="5" fill="#dcc000" stroke="#000" stroke-width="1"/><rect x="980.5" y="825.5" width="5" height="5" fill="#dcc000" stroke="#000" stroke-width="1"/><rect x="1025.5" y="823.5" width="5" height="5" fill="#dcc000" stroke="#000" stroke-width="1"/><rect x="1069.5" y="823.5" width="5" height="5" fill="#dcc000" stroke="#000" stroke-width="1"/><rect x="1113.5" y="823.5" width="5" height="5" fill="#dcc000" stroke="#000" stroke-width="1"/><rect x="1158.5" y="823.5" width="5" height="5" fill="#dcc000" stroke="#000" stroke-width="1"/><rect x="1202.5" y="825.5" width="5" height="5" fill="#dcc000" stroke="#000" stroke-width="1"/><rect x="1246.5" y="823.5" width="5" height="5" fill="#dcc000" stroke="#000" stroke-width="1"/><rect x="1291.5" y="822.5" width="5" height="5" fill="#dcc000" stroke="#000" stroke-width="1"/><rect x="1335.5" y="819.5" width="5" height="5" fill="#dcc000" stroke="#000" stroke-width="1"/><rect x="1379.5" y="817.5" width="5" height="5" fill="#dcc000" stroke="#000" stroke-width="1"/><rect x="1424.5" y="818.5" width="5" height="5" fill="#dcc000" stroke="#000" stroke-width="1"/><rect x="1468.5" y="818.5" width="5" height="5" fill="#dcc000" stroke="#000" stroke-width="1"/><rect x="1512.5" y="818.5" width="5" height="5" fill="#dcc000" stroke="#000" stroke-width="1"/><polyline points="96.5,826 140.8,826 185.2,826 229.5,825 273.9,826 318.2,821 362.5,822 406.9,825 451.2,825 495.6,825 539.9,826 584.2,858 628.6,858 672.9,858 717.3,856 761.6,828 805.9,828 850.3,827 894.6,827 939.0,828 983.3,828 1027.6,828 1072.0,828 1116.3,828 1160.7,827 1205.0,829 1249.3,828 1293.7,827 1338.0,823 1382.4,822 1426.7,822 1471.0,823 1515.4,822" fill="none" stroke="#005a84" stroke-width="2" stroke-linejoin="round"/><rect x="94.5" y="823.5" width="5" height="5" fill="#1878a2" stroke="#000" stroke-width="1"/><rect x="138.5" y="823.5" width="5" height="5" fill="#1878a2" stroke="#000" stroke-width="1"/><rect x="182.5" y="823.5" width="5" height="5" fill="#1878a2" stroke="#000" stroke-width="1"/><rect x="227.5" y="822.5" width="5" height="5" fill="#1878a2" stroke="#000" stroke-width="1"/><rect x="271.5" y="823.5" width="5" height="5" fill="#1878a2" stroke="#000" stroke-width="1"/><rect x="315.5" y="818.5" width="5" height="5" fill="#1878a2" stroke="#000" stroke-width="1"/><rect x="360.5" y="819.5" width="5" height="5" fill="#1878a2" stroke="#000" stroke-width="1"/><rect x="404.5" y="822.5" width="5" height="5" fill="#1878a2" stroke="#000" stroke-width="1"/><rect x="448.5" y="822.5" width="5" height="5" fill="#1878a2" stroke="#000" stroke-width="1"/><rect x="493.5" y="822.5" width="5" height="5" fill="#1878a2" stroke="#000" stroke-width="1"/><rect x="537.5" y="823.5" width="5" height="5" fill="#1878a2" stroke="#000" stroke-width="1"/><rect x="581.5" y="855.5" width="5" height="5" fill="#1878a2" stroke="#000" stroke-width="1"/><rect x="626.5" y="855.5" width="5" height="5" fill="#1878a2" stroke="#000" stroke-width="1"/><rect x="670.5" y="855.5" width="5" height="5" fill="#1878a2" stroke="#000" stroke-width="1"/><rect x="714.5" y="853.5" width="5" height="5" fill="#1878a2" stroke="#000" stroke-width="1"/><rect x="759.5" y="825.5" width="5" height="5" fill="#1878a2" stroke="#000" stroke-width="1"/><rect x="803.5" y="825.5" width="5" height="5" fill="#1878a2" stroke="#000" stroke-width="1"/><rect x="847.5" y="824.5" width="5" height="5" fill="#1878a2" stroke="#000" stroke-width="1"/><rect x="892.5" y="824.5" width="5" height="5" fill="#1878a2" stroke="#000" stroke-width="1"/><rect x="936.5" y="825.5" width="5" height="5" fill="#1878a2" stroke="#000" stroke-width="1"/><rect x="980.5" y="825.5" width="5" height="5" fill="#1878a2" stroke="#000" stroke-width="1"/><rect x="1025.5" y="825.5" width="5" height="5" fill="#1878a2" stroke="#000" stroke-width="1"/><rect x="1069.5" y="825.5" width="5" height="5" fill="#1878a2" stroke="#000" stroke-width="1"/><rect x="1113.5" y="825.5" width="5" height="5" fill="#1878a2" stroke="#000" stroke-width="1"/><rect x="1158.5" y="824.5" width="5" height="5" fill="#1878a2" stroke="#000" stroke-width="1"/><rect x="1202.5" y="826.5" width="5" height="5" fill="#1878a2" stroke="#000" stroke-width="1"/><rect x="1246.5" y="825.5" width="5" height="5" fill="#1878a2" stroke="#000" stroke-width="1"/><rect x="1291.5" y="824.5" width="5" height="5" fill="#1878a2" stroke="#000" stroke-width="1"/><rect x="1335.5" y="820.5" width="5" height="5" fill="#1878a2" stroke="#000" stroke-width="1"/><rect x="1379.5" y="819.5" width="5" height="5" fill="#1878a2" stroke="#000" stroke-width="1"/><rect x="1424.5" y="819.5" width="5" height="5" fill="#1878a2" stroke="#000" stroke-width="1"/><rect x="1468.5" y="820.5" width="5" height="5" fill="#1878a2" stroke="#000" stroke-width="1"/><rect x="1512.5" y="819.5" width="5" height="5" fill="#1878a2" stroke="#000" stroke-width="1"/><polyline points="96.5,843 140.8,840 185.2,856 229.5,856 273.9,856 318.2,856 362.5,856 406.9,856 451.2,856 495.6,856 539.9,856 584.2,858 628.6,858 672.9,858 717.3,858 761.6,856 805.9,856 850.3,856 894.6,856 939.0,856 983.3,856 1027.6,856 1072.0,856 1116.3,856 1160.7,856 1205.0,856 1249.3,856 1293.7,856 1338.0,856 1382.4,856 1426.7,856 1471.0,856 1515.4,856" fill="none" stroke="#b8000f" stroke-width="2" stroke-linejoin="round"/><rect x="94.5" y="840.5" width="5" height="5" fill="#c40f22" stroke="#000" stroke-width="1"/><rect x="138.5" y="837.5" width="5" height="5" fill="#c40f22" stroke="#000" stroke-width="1"/><rect x="182.5" y="854.5" width="5" height="5" fill="#c40f22" stroke="#000" stroke-width="1"/><rect x="227.5" y="854.5" width="5" height="5" fill="#c40f22" stroke="#000" stroke-width="1"/><rect x="271.5" y="854.5" width="5" height="5" fill="#c40f22" stroke="#000" stroke-width="1"/><rect x="315.5" y="854.5" width="5" height="5" fill="#c40f22" stroke="#000" stroke-width="1"/><rect x="360.5" y="854.5" width="5" height="5" fill="#c40f22" stroke="#000" stroke-width="1"/><rect x="404.5" y="854.5" width="5" height="5" fill="#c40f22" stroke="#000" stroke-width="1"/><rect x="448.5" y="854.5" width="5" height="5" fill="#c40f22" stroke="#000" stroke-width="1"/><rect x="493.5" y="854.5" width="5" height="5" fill="#c40f22" stroke="#000" stroke-width="1"/><rect x="537.5" y="854.5" width="5" height="5" fill="#c40f22" stroke="#000" stroke-width="1"/><rect x="581.5" y="855.5" width="5" height="5" fill="#c40f22" stroke="#000" stroke-width="1"/><rect x="626.5" y="855.5" width="5" height="5" fill="#c40f22" stroke="#000" stroke-width="1"/><rect x="670.5" y="855.5" width="5" height="5" fill="#c40f22" stroke="#000" stroke-width="1"/><rect x="714.5" y="855.5" width="5" height="5" fill="#c40f22" stroke="#000" stroke-width="1"/><rect x="759.5" y="854.5" width="5" height="5" fill="#c40f22" stroke="#000" stroke-width="1"/><rect x="803.5" y="854.5" width="5" height="5" fill="#c40f22" stroke="#000" stroke-width="1"/><rect x="847.5" y="854.5" width="5" height="5" fill="#c40f22" stroke="#000" stroke-width="1"/><rect x="892.5" y="854.5" width="5" height="5" fill="#c40f22" stroke="#000" stroke-width="1"/><rect x="936.5" y="854.5" width="5" height="5" fill="#c40f22" stroke="#000" stroke-width="1"/><rect x="980.5" y="854.5" width="5" height="5" fill="#c40f22" stroke="#000" stroke-width="1"/><rect x="1025.5" y="854.5" width="5" height="5" fill="#c40f22" stroke="#000" stroke-width="1"/><rect x="1069.5" y="854.5" width="5" height="5" fill="#c40f22" stroke="#000" stroke-width="1"/><rect x="1113.5" y="854.5" width="5" height="5" fill="#c40f22" stroke="#000" stroke-width="1"/><rect x="1158.5" y="854.5" width="5" height="5" fill="#c40f22" stroke="#000" stroke-width="1"/><rect x="1202.5" y="854.5" width="5" height="5" fill="#c40f22" stroke="#000" stroke-width="1"/><rect x="1246.5" y="854.5" width="5" height="5" fill="#c40f22" stroke="#000" stroke-width="1"/><rect x="1291.5" y="854.5" width="5" height="5" fill="#c40f22" stroke="#000" stroke-width="1"/><rect x="1335.5" y="854.5" width="5" height="5" fill="#c40f22" stroke="#000" stroke-width="1"/><rect x="1379.5" y="854.5" width="5" height="5" fill="#c40f22" stroke="#000" stroke-width="1"/><rect x="1424.5" y="854.5" width="5" height="5" fill="#c40f22" stroke="#000" stroke-width="1"/><rect x="1468.5" y="854.5" width="5" height="5" fill="#c40f22" stroke="#000" stroke-width="1"/><rect x="1512.5" y="854.5" width="5" height="5" fill="#c40f22" stroke="#000" stroke-width="1"/><rect x="929" y="917" width="16" height="2" fill="#c9b000"/><rect x="934.5" y="916.5" width="5" height="5" fill="#dcc000" stroke="#000"/><text x="946.4" y="924" font-size="14.67" textLength="93.4" lengthAdjust="spacing">Data collected</text><rect x="1046" y="917" width="16" height="2" fill="#005a84"/><rect x="1051.5" y="916.5" width="5" height="5" fill="#1878a2" stroke="#000"/><text x="1063.4" y="924" font-size="14.67" textLength="79.6" lengthAdjust="spacing">Data unsent</text><rect x="1163" y="917" width="16" height="2" fill="#009a00"/><rect x="1168.5" y="916.5" width="5" height="5" fill="#00ab00" stroke="#000"/><text x="1180.5" y="924" font-size="14.67" textLength="94.3" lengthAdjust="spacing">Data uploaded</text><rect x="1280" y="917" width="16" height="2" fill="#b8000f"/><rect x="1285.5" y="916.5" width="5" height="5" fill="#c40f22" stroke="#000"/><text x="1297.6" y="924" font-size="14.67" textLength="83" lengthAdjust="spacing">Upload Error</text></svg>
<div style="position:absolute;left:147px;top:41px;width:224.5px;height:306px;box-sizing:border-box;border:1px solid #979797;border-right-color:#d4d4d4;border-bottom-color:#d4d4d4;background:#fff;box-shadow:inset 0 0 0 2px #f1f1f1,2.5px 2.5px 2px 0 rgba(0,0,0,.45);"></div>
<div style="position:absolute;left:150px;top:208px;width:216px;height:27px;background:#fcdc7e;"></div>
<div class="t" style="left:179.40px;top:47.52px;font-size:15.80px;color:#000;letter-spacing:-0.757px;word-spacing:1.815px;">L<u>i</u>cense management</div>
<div class="t" style="left:179.98px;top:75.52px;font-size:15.80px;color:#000;letter-spacing:-1.091px;word-spacing:2.482px;"><u>S</u>etup Global Config</div>
<div class="t" style="left:179.98px;top:102.52px;font-size:15.80px;color:#000;letter-spacing:-0.898px;word-spacing:2.095px;">S<u>e</u>tup Group Def</div>
<div class="t" style="left:179.98px;top:129.52px;font-size:15.80px;color:#000;letter-spacing:-0.904px;word-spacing:2.107px;">Se<u>t</u>up Task Group</div>
<div class="t" style="left:180.67px;top:156.52px;font-size:15.80px;color:#000;letter-spacing:-1.130px;word-spacing:2.560px;"><u>A</u>pp Log Level</div>
<div class="t" style="left:179.98px;top:184.52px;font-size:15.80px;color:#000;letter-spacing:-0.728px;word-spacing:1.757px;">Setup <u>M</u>etric</div>
<svg style="position:absolute;left:353.3px;top:189.3px" width="7" height="11" viewBox="0 0 7 11"><path d="M0 0 L6.5 5.5 L0 11 Z" fill="#000"/></svg>
<div class="t" style="left:179.40px;top:211.52px;font-size:15.80px;color:#000;letter-spacing:-0.571px;word-spacing:1.442px;">Met<u>r</u>ic filters</div>
<svg style="position:absolute;left:353.3px;top:216.3px" width="7" height="11" viewBox="0 0 7 11"><path d="M0 0 L6.5 5.5 L0 11 Z" fill="#000"/></svg>
<div class="t" style="left:179.98px;top:239.52px;font-size:15.80px;color:#000;letter-spacing:-0.920px;word-spacing:2.140px;">Set<u>u</u>p Uploader</div>
<div class="t" style="left:179.98px;top:266.52px;font-size:15.80px;color:#000;letter-spacing:-0.918px;word-spacing:2.137px;">Setup Up<u>l</u>oader Cfg</div>
<div class="t" style="left:179.98px;top:293.52px;font-size:15.80px;color:#000;letter-spacing:-1.168px;word-spacing:2.635px;">S<u>p</u>lunk Setup</div>
<svg style="position:absolute;left:353.3px;top:298.3px" width="7" height="11" viewBox="0 0 7 11"><path d="M0 0 L6.5 5.5 L0 11 Z" fill="#000"/></svg>
<div class="t" style="left:179.90px;top:321.52px;font-size:15.80px;color:#000;letter-spacing:-1.046px;word-spacing:2.391px;"><u>C</u>heck Errors</div>
<div style="position:absolute;left:150px;top:71px;width:219px;height:1px;background:#b9c3cf;"></div>
<div style="position:absolute;left:150px;top:180px;width:219px;height:1px;background:#b9c3cf;"></div>
<div style="position:absolute;left:150px;top:317px;width:219px;height:1px;background:#b9c3cf;"></div>
<div style="position:absolute;left:366px;top:205px;width:220.3px;height:410px;box-sizing:border-box;border:1px solid #979797;border-right-color:#d4d4d4;border-bottom-color:#d4d4d4;background:#fff;box-shadow:inset 0 0 0 2px #f1f1f1,2.5px 2.5px 2px 0 rgba(0,0,0,.45);"></div>
<div style="position:absolute;left:369.3px;top:451px;width:214.7px;height:27px;background:#fcdc7e;"></div>
<div class="t" style="left:398.20px;top:211.52px;font-size:15.80px;color:#000;letter-spacing:-0.821px;word-spacing:1.942px;"><u>E</u>CATT Configuration</div>
<div class="t" style="left:398.04px;top:238.52px;font-size:15.80px;color:#000;letter-spacing:-0.660px;word-spacing:1.621px;"><u>I</u>DOC Segment filter</div>
<div class="t" style="left:398.70px;top:265.52px;font-size:15.80px;color:#000;letter-spacing:-0.698px;word-spacing:1.696px;"><u>C</u>hange doc. filter</div>
<div class="t" style="left:399.15px;top:292.52px;font-size:15.80px;color:#000;letter-spacing:-0.629px;word-spacing:1.558px;"><u>T</u>able reader filter</div>
<div class="t" style="left:398.20px;top:319.52px;font-size:15.80px;color:#000;letter-spacing:-0.591px;word-spacing:1.482px;"><u>N</u>RIV filter</div>
<div class="t" style="left:398.78px;top:346.52px;font-size:15.80px;color:#000;letter-spacing:-0.583px;word-spacing:1.466px;">SQ<u>V</u>I report filter</div>
<div class="t" style="left:398.20px;top:373.52px;font-size:15.80px;color:#000;letter-spacing:-0.739px;word-spacing:1.778px;"><u>L</u>ogs file filter</div>
<div class="t" style="left:398.78px;top:400.52px;font-size:15.80px;color:#000;letter-spacing:-0.761px;word-spacing:1.822px;">SM<u>3</u>7 job filter</div>
<div class="t" style="left:398.78px;top:427.52px;font-size:15.80px;color:#000;letter-spacing:-0.947px;word-spacing:2.194px;">S<u>O</u>ST filter</div>
<div class="t" style="left:399.47px;top:454.52px;font-size:15.80px;color:#000;letter-spacing:-0.918px;word-spacing:2.136px;"><u>A</u>L11 filter</div>
<div class="t" style="left:398.78px;top:481.52px;font-size:15.80px;color:#000;letter-spacing:-1.170px;word-spacing:2.640px;"><u>S</u>LG1 filter</div>
<div class="t" style="left:398.78px;top:508.52px;font-size:15.80px;color:#000;letter-spacing:-0.783px;word-spacing:1.866px;">S<u>R</u>T_MONI filter</div>
<div class="t" style="left:398.78px;top:535.52px;font-size:15.80px;color:#000;letter-spacing:-0.883px;word-spacing:2.067px;">STA<u>D</u> metrics</div>
<svg style="position:absolute;left:568px;top:540.3px" width="7" height="11" viewBox="0 0 7 11"><path d="M0 0 L6.5 5.5 L0 11 Z" fill="#000"/></svg>
<div class="t" style="left:398.78px;top:562.52px;font-size:15.80px;color:#000;letter-spacing:-1.043px;word-spacing:2.386px;">S<u>Q</u>L Scripts metrics</div>
<svg style="position:absolute;left:568px;top:567.3px" width="7" height="11" viewBox="0 0 7 11"><path d="M0 0 L6.5 5.5 L0 11 Z" fill="#000"/></svg>
<div class="t" style="left:398.20px;top:589.52px;font-size:15.80px;color:#000;letter-spacing:-0.433px;"><u>M</u>ore</div>
<svg style="position:absolute;left:568px;top:594.3px" width="7" height="11" viewBox="0 0 7 11"><path d="M0 0 L6.5 5.5 L0 11 Z" fill="#000"/></svg>
</body></html>
